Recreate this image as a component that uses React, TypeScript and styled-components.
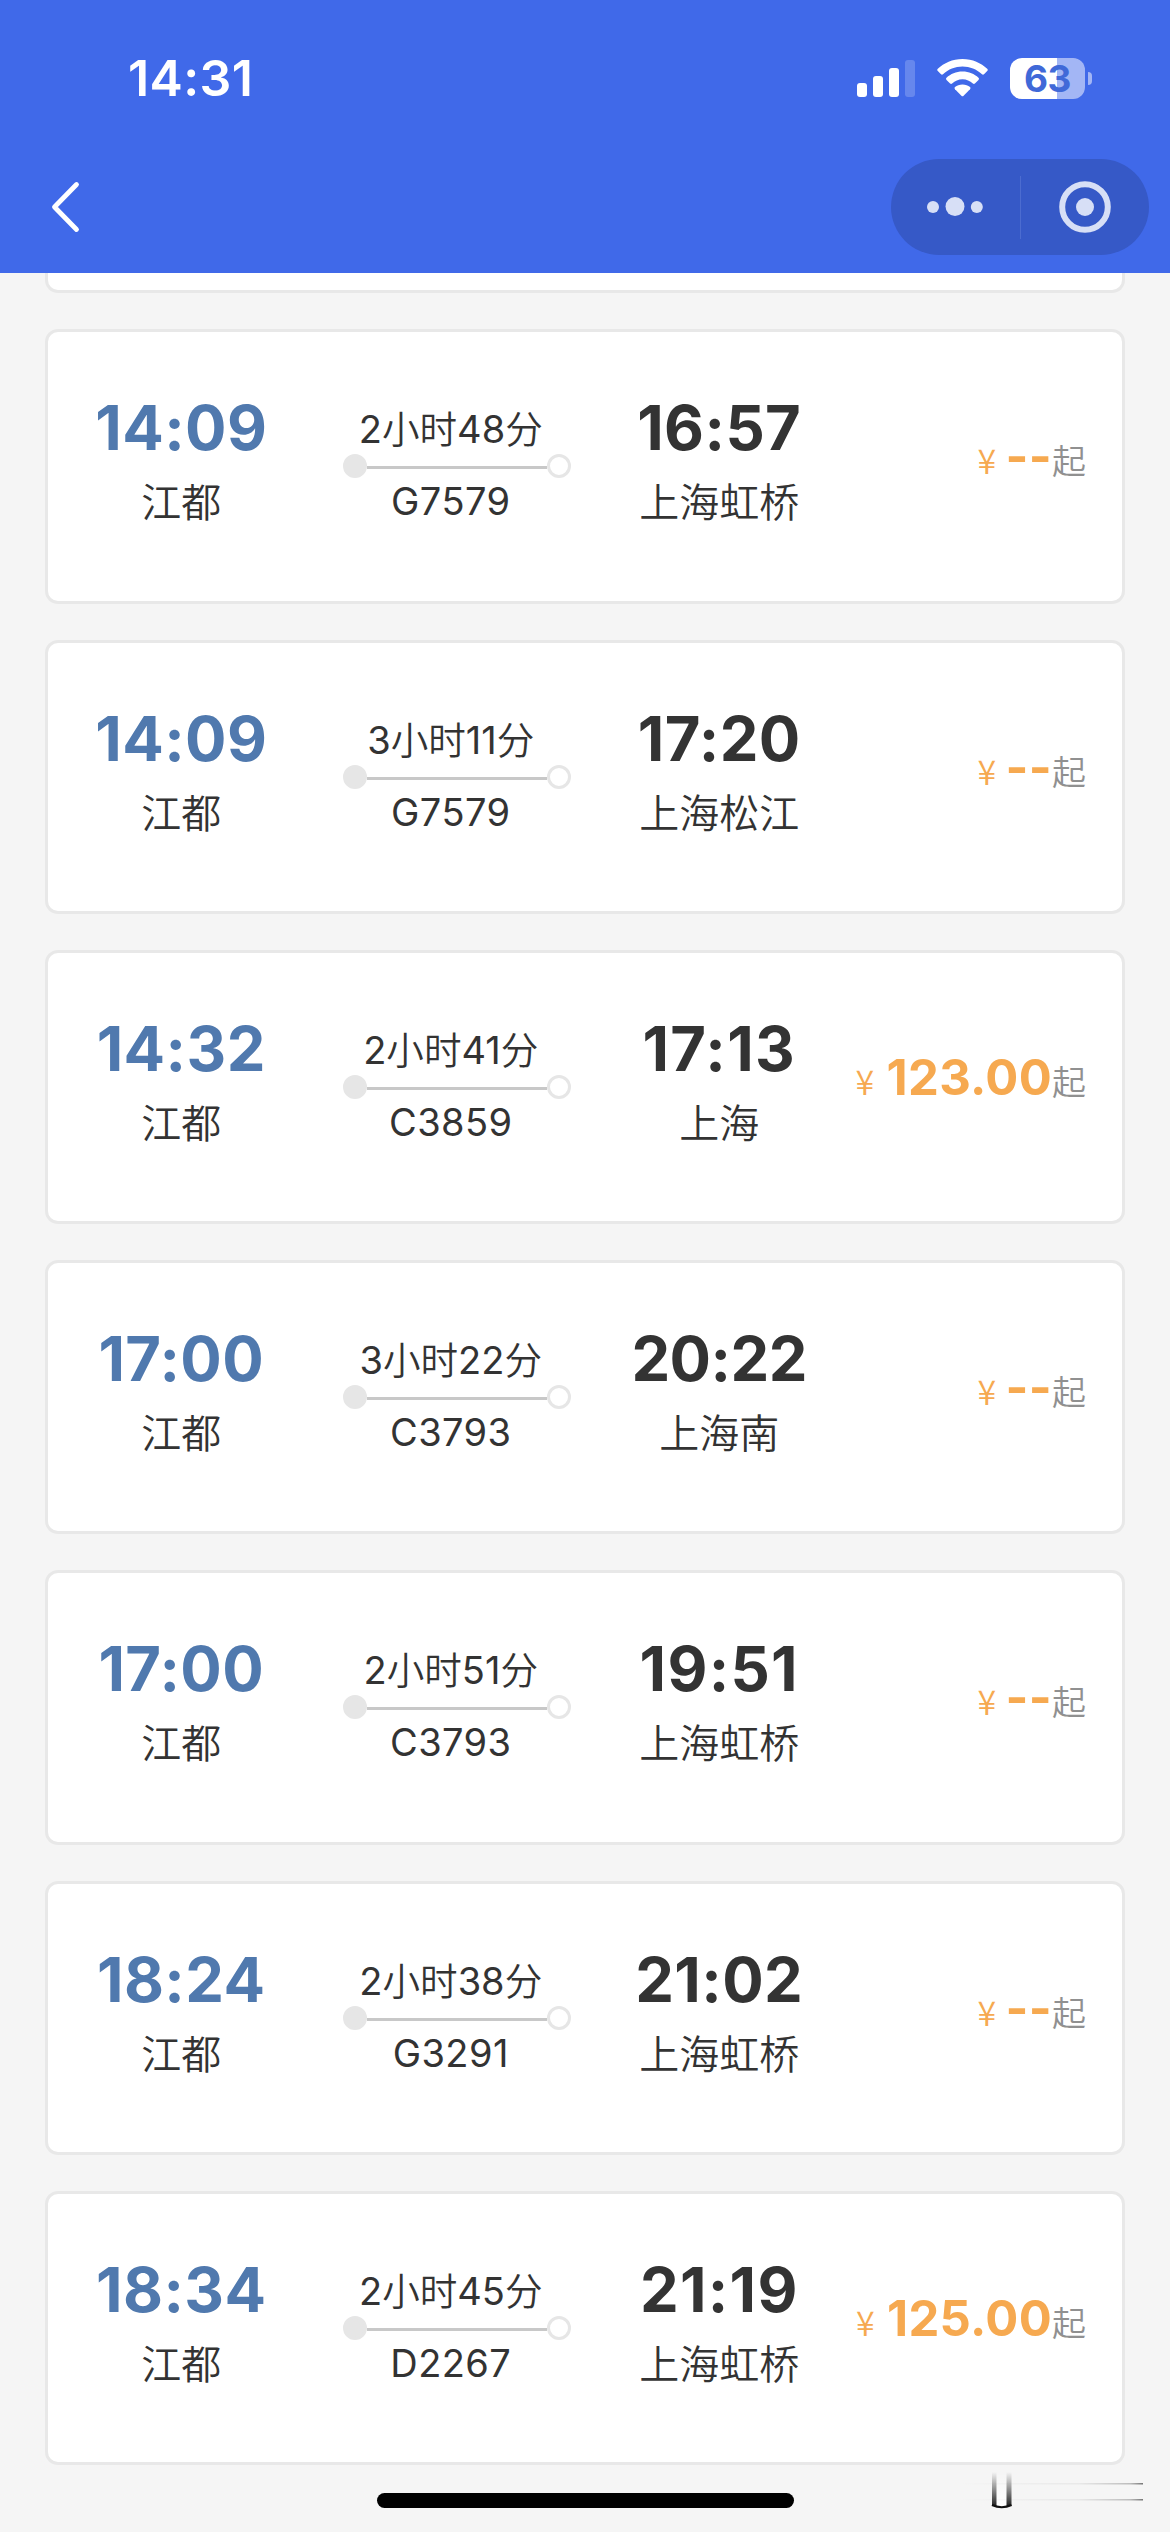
import React from 'react';
import styled, { createGlobalStyle } from 'styled-components';

const Global = createGlobalStyle`
  * { box-sizing: border-box; }
  html, body { margin: 0; background: #f5f5f5; }
  body { font-family: Inter, "Noto Sans CJK SC", sans-serif; color: #333; }
`;

const Screen = styled.div`
  position: relative;
  width: 1170px;
  height: 2532px;
  overflow: hidden;
  display: flex;
  flex-direction: column;
  background: #f5f5f5;
`;

const Header = styled.header`
  flex: none;
  height: 273px;
  background: #4069e9;
  color: #fff;
`;

const StatusBar = styled.div`
  display: flex;
  justify-content: space-between;
  align-items: center;
  height: 156px;
  padding: 0 78px 0 128px;
`;

const Clock = styled.span`
  font-size: 50px;
  font-weight: 600;
  line-height: 60px;
  letter-spacing: 0.4px;
`;

const StatusIcons = styled.div`
  display: flex;
  align-items: center;
`;

const Signal = styled.svg`
  display: block;
  margin-right: 22px;
`;

const Wifi = styled.svg`
  display: block;
  margin-right: 22px;
`;

const Battery = styled.div`
  display: flex;
  align-items: center;
  justify-content: center;
  width: 75px;
  height: 41px;
  border-radius: 12px;
  background: linear-gradient(to right, #fff 47px, #a3b6f5 47px);
  color: #4069d8;
  font-size: 37px;
  font-weight: 700;
  line-height: 41px;
  letter-spacing: -0.5px;
`;

const BatteryTip = styled.span`
  width: 4px;
  height: 13px;
  margin-left: 3px;
  border-radius: 0 4px 4px 0;
  background: #a3b6f5;
`;

const NavBar = styled.nav`
  display: flex;
  justify-content: space-between;
  align-items: center;
  height: 102px;
  padding: 0 21px 0 48px;
`;

const Back = styled.button`
  padding: 0;
  border: 0;
  background: none;
  display: flex;
`;

const Capsule = styled.div`
  display: flex;
  align-items: center;
  width: 258px;
  height: 96px;
  border-radius: 48px;
  background: #3659c7;
`;

const CapsuleHalf = styled.div`
  flex: 1;
  display: flex;
  justify-content: center;
  align-items: center;
`;

const Divider = styled.span`
  width: 1px;
  height: 63px;
  background: #4c6cd0;
`;

const List = styled.main`
  display: flex;
  flex-direction: column;
  gap: 36px;
  padding: 0 45px;
`;

const PreviousCard = styled.div`
  height: 20.4px;
  border: 3px solid #e8e8e8;
  border-top: 0;
  border-radius: 0 0 13px 13px;
  background: #fff;
`;

const Card = styled.article`
  display: grid;
  grid-template-columns: repeat(4, 1fr);
  height: 274.25px;
  padding-top: 62px;
  border: 3px solid #e8e8e8;
  border-radius: 13px;
  background: #fff;
`;

const Stop = styled.div<{ $inset?: number }>`
  display: flex;
  flex-direction: column;
  align-items: center;
  padding-right: ${(p) => p.$inset ?? 0}px;
`;

const Time = styled.div<{ $tone: string; $tracking: number }>`
  color: ${(p) => p.$tone};
  font-size: 61.5px;
  font-weight: 700;
  line-height: 68px;
  letter-spacing: ${(p) => p.$tracking}px;
`;

const Station = styled.div`
  margin-top: 11px;
  font-size: 40px;
  font-weight: 350;
  line-height: 60px;
`;

const Trip = styled.div`
  display: flex;
  flex-direction: column;
  align-items: center;
  padding-top: 10px;
`;

const TripText = styled.div`
  height: 50px;
  font-size: 38px;
  font-weight: 400;
  line-height: 50px;
  white-space: nowrap;
`;

const Unit = styled.span`
  font-size: 37.6px;
  font-weight: 350;
`;

const Code = styled(TripText)`
  margin-top: -2px;
  letter-spacing: 0.4px;
`;

const Track = styled.div`
  display: flex;
  align-items: center;
  width: 228px;
  height: 24px;
  margin-left: 12px;
`;

const Dot = styled.span<{ $filled?: boolean }>`
  width: 24px;
  height: 24px;
  border: 3px solid #e6e6e6;
  border-radius: 50%;
  background: ${(p) => (p.$filled ? '#e6e6e6' : '#fff')};
`;

const Line = styled.span`
  flex: 1;
  height: 3px;
  margin-top: 3px;
  background: #c8c8c8;
`;

const Price = styled.div`
  display: flex;
  justify-content: flex-end;
  align-items: baseline;
  padding: 33px 36px 0 0;
  color: #f6a950;
  line-height: 60px;
  white-space: nowrap;
`;

const Yen = styled.span<{ $width: number }>`
  width: ${(p) => p.$width}px;
  font-family: "Noto Sans CJK SC", sans-serif;
  font-size: 34px;
  font-weight: 350;
`;

const Amount = styled.span`
  font-size: 49px;
  font-weight: 700;
  letter-spacing: 0.3px;
`;

const From = styled.span`
  color: #909090;
  font-size: 34px;
  font-weight: 350;
`;

const HomeIndicator = styled.div`
  position: absolute;
  left: 377px;
  top: 2493px;
  width: 417px;
  height: 15px;
  border-radius: 8px;
  background: #000;
`;

const Smudge = styled.svg`
  position: absolute;
  left: 900px;
  top: 2468px;
`;

type Train = {
  depart: string;
  arrive: string;
  to: string;
  hours: number;
  minutes: number;
  code: string;
  price?: string;
};

const trains: Train[] = [
  { depart: '14:09', arrive: '16:57', to: '上海虹桥', hours: 2, minutes: 48, code: 'G7579' },
  { depart: '14:09', arrive: '17:20', to: '上海松江', hours: 3, minutes: 11, code: 'G7579' },
  { depart: '14:32', arrive: '17:13', to: '上海', hours: 2, minutes: 41, code: 'C3859', price: '123.00' },
  { depart: '17:00', arrive: '20:22', to: '上海南', hours: 3, minutes: 22, code: 'C3793' },
  { depart: '17:00', arrive: '19:51', to: '上海虹桥', hours: 2, minutes: 51, code: 'C3793' },
  { depart: '18:24', arrive: '21:02', to: '上海虹桥', hours: 2, minutes: 38, code: 'G3291' },
  { depart: '18:34', arrive: '21:19', to: '上海虹桥', hours: 2, minutes: 45, code: 'D2267', price: '125.00' },
];

// The narrow "1" pulls a time together, so each one opens the tracking a little.
const tracking = (time: string) => -0.5 + 0.9 * (time.split('1').length - 1);

function TrainCard({ train }: { train: Train }) {
  return (
    <Card>
      <Stop $inset={2}>
        <Time $tone="#5079ae" $tracking={tracking(train.depart)}>{train.depart}</Time>
        <Station>江都</Station>
      </Stop>
      <Trip>
        <TripText>
          {train.hours}
          <Unit>小时</Unit>
          {train.minutes}
          <Unit>分</Unit>
        </TripText>
        <Track>
          <Dot $filled />
          <Line />
          <Dot />
        </Track>
        <Code>{train.code}</Code>
      </Trip>
      <Stop>
        <Time $tone="#333" $tracking={tracking(train.arrive)}>{train.arrive}</Time>
        <Station>{train.to}</Station>
      </Stop>
      <Price>
        <Yen $width={train.price ? 31 : 28}>¥</Yen>
        <Amount>{train.price ?? '--'}</Amount>
        <From>起</From>
      </Price>
    </Card>
  );
}

export default function App() {
  return (
    <Screen>
      <Global />
      <Header>
        <StatusBar>
          <Clock>14:31</Clock>
          <StatusIcons>
            <Signal width="58" height="37" viewBox="0 0 58 37" fill="#fff">
              <rect x="0" y="23" width="10" height="14" rx="3" />
              <rect x="16" y="16" width="10" height="21" rx="3" />
              <rect x="32" y="8" width="10" height="29" rx="3" />
              <rect x="48" y="0" width="10" height="37" rx="3" opacity="0.2" />
            </Signal>
            <Wifi width="51" height="38" viewBox="0 0 51 38" fill="#fff">
              <path d="M25.5 0C35.6 0 44 4 50.2 9.8Q51.3 10.9 50.2 12L47 15.3Q46 16.2 45 15.3C39.6 10.4 33 7.6 25.5 7.6S11.4 10.4 6 15.3Q5 16.2 4 15.3L.8 12Q-.3 10.9.8 9.8C7 4 15.4 0 25.5 0Z" />
              <path d="M25.5 12.6C32 12.6 37.3 15 41.5 18.8Q42.6 19.9 41.5 21L37.9 24.6Q36.9 25.5 35.9 24.6C33 22 29.6 20.3 25.5 20.3S18 22 15.1 24.6Q14.1 25.5 13.1 24.6L9.5 21Q8.4 19.9 9.5 18.8C13.7 15 19 12.6 25.5 12.6Z" />
              <path d="M25.5 25.4C28.6 25.4 31 26.4 33 28Q34.1 29 33 30.2L26.6 36.7Q25.5 37.7 24.4 36.7L18 30.2Q16.9 29 18 28C20 26.4 22.4 25.4 25.5 25.4Z" />
            </Wifi>
            <Battery>63</Battery>
            <BatteryTip />
          </StatusIcons>
        </StatusBar>
        <NavBar>
          <Back aria-label="返回">
            <svg width="36" height="54" viewBox="0 0 36 54" fill="none" stroke="#fff" strokeWidth="4.8" strokeLinecap="round" strokeLinejoin="round">
              <path d="M28.5 4.5L6.5 27L28.5 49.5" />
            </svg>
          </Back>
          <Capsule>
            <CapsuleHalf>
              <svg width="56" height="20" viewBox="0 0 56 20" fill="#d7dff6">
                <circle cx="6" cy="10" r="6" />
                <circle cx="28" cy="9.5" r="9.5" />
                <circle cx="49.8" cy="10" r="6" />
              </svg>
            </CapsuleHalf>
            <Divider />
            <CapsuleHalf>
              <svg width="52" height="52" viewBox="0 0 52 52">
                <circle cx="26" cy="26" r="22.8" fill="none" stroke="#d7dff6" strokeWidth="6" />
                <circle cx="26" cy="26" r="9" fill="#d7dff6" />
              </svg>
            </CapsuleHalf>
          </Capsule>
        </NavBar>
      </Header>
      <List>
        <PreviousCard />
        {trains.map((t, i) => (
          <TrainCard key={i} train={t} />
        ))}
      </List>
      <HomeIndicator />
      <Smudge width="250" height="50" viewBox="0 0 250 50">
        <defs>
          <linearGradient id="post" x1="0" y1="0" x2="0" y2="1">
            <stop offset="0" stopColor="#333" stopOpacity="0" />
            <stop offset="1" stopColor="#222" />
          </linearGradient>
          <linearGradient id="trail" x1="0" y1="0" x2="1" y2="0">
            <stop offset="0" stopColor="#777" stopOpacity="0" />
            <stop offset="0.65" stopColor="#777" stopOpacity="0.1" />
            <stop offset="0.93" stopColor="#666" stopOpacity="0.4" />
            <stop offset="1" stopColor="#555" stopOpacity="0.8" />
          </linearGradient>
          <linearGradient id="core" x1="0" y1="0" x2="0" y2="1">
            <stop offset="0" stopColor="#fff" stopOpacity="0" />
            <stop offset="1" stopColor="#fff" />
          </linearGradient>
        </defs>
        <rect x="96" y="5" width="11" height="33" fill="url(#core)" />
        <rect x="92" y="4" width="4.500" height="34" fill="url(#post)" />
        <rect x="106.500" y="4" width="5" height="34" fill="url(#post)" />
        <path d="M92 37Q101.700 41.500 111.500 37" fill="none" stroke="#111" strokeWidth="2.200" />
        <rect x="60" y="15" width="183" height="1.500" fill="url(#trail)" />
        <rect x="60" y="31" width="183" height="1.500" fill="url(#trail)" />
      </Smudge>
    </Screen>
  );
}
